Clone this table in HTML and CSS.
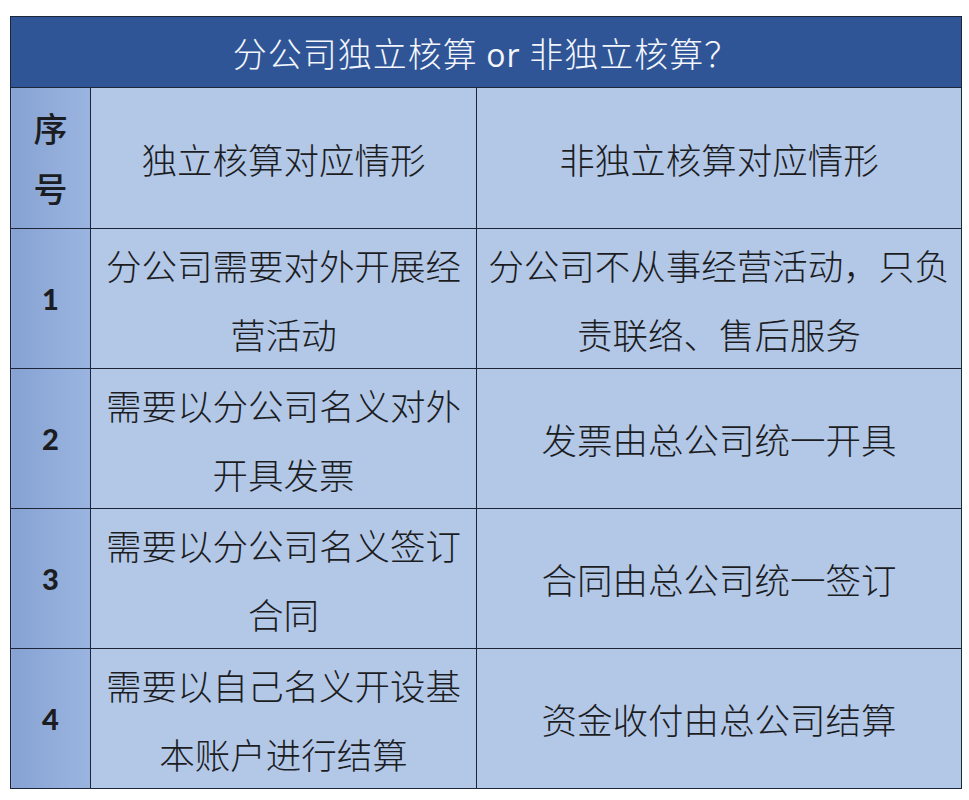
FILE: index.html
```html
<!DOCTYPE html>
<html lang="zh-CN">
<head>
<meta charset="utf-8">
<title>分公司独立核算 or 非独立核算？</title>
<link rel="stylesheet" href="styles.css">
</head>
<body>
<div class="page">
  <table class="sheet">
    <colgroup>
      <col class="c-seq">
      <col class="c-a">
      <col class="c-b">
    </colgroup>
    <tr class="r-title">
      <th colspan="3" class="title">分公司独立核算 <span class="latin">or</span> 非独立核算？</th>
    </tr>
    <tr class="r-head">
      <td class="seq seq-head">序<br>号</td>
      <td class="cell">独立核算对应情形</td>
      <td class="cell">非独立核算对应情形</td>
    </tr>
    <tr class="r-body">
      <td class="seq num">1</td>
      <td class="cell">分公司需要对外开展经<br>营活动</td>
      <td class="cell">分公司不从事经营活动，只负<br>责联络、售后服务</td>
    </tr>
    <tr class="r-body">
      <td class="seq num">2</td>
      <td class="cell">需要以分公司名义对外<br>开具发票</td>
      <td class="cell">发票由总公司统一开具</td>
    </tr>
    <tr class="r-body">
      <td class="seq num">3</td>
      <td class="cell">需要以分公司名义签订<br>合同</td>
      <td class="cell">合同由总公司统一签订</td>
    </tr>
    <tr class="r-body">
      <td class="seq num">4</td>
      <td class="cell">需要以自己名义开设基<br>本账户进行结算</td>
      <td class="cell">资金收付由总公司结算</td>
    </tr>
  </table>
</div>
</body>
</html>
```
FILE: styles.css
```css
html, body {
  margin: 0;
  padding: 0;
  background: #ffffff;
}

.page {
  padding: 16px 8px 0 10px;
}

.sheet {
  width: 951px;
  border-collapse: collapse;
  table-layout: fixed;
  font-family: "Noto Sans CJK SC", "Noto Sans", sans-serif;
  color: #1b1d22;
}

.c-seq { width: 80px; }
.c-a { width: 386px; }
.c-b { width: 485px; }

.sheet th,
.sheet td {
  border: 1.5px solid #1c2638;
  padding: 0;
  text-align: center;
  vertical-align: middle;
}

.r-title { height: 71px; }
.r-head { height: 141px; }
.r-body { height: 140px; }

.title {
  background: #2f5597;
  color: #f4f6fb;
  font-size: 34px;
  font-weight: 300;
  letter-spacing: 1px;
}

.latin {
  font-family: "Open Sans", "Liberation Sans", sans-serif;
  font-weight: 400;
  font-size: 32px;
}

.seq {
  background: linear-gradient(90deg, #86a2d2 0%, #93aedb 60%, #9ab4df 100%);
}

.seq-head {
  font-size: 34px;
  font-weight: 500;
  line-height: 60px;
}

.num {
  font-family: Lato, "Open Sans", "Liberation Sans", sans-serif;
  font-weight: 900;
  font-size: 29px;
}

.cell {
  background: #b3c7e7;
  font-size: 35.5px;
  font-weight: 300;
  line-height: 69px;
}
```
